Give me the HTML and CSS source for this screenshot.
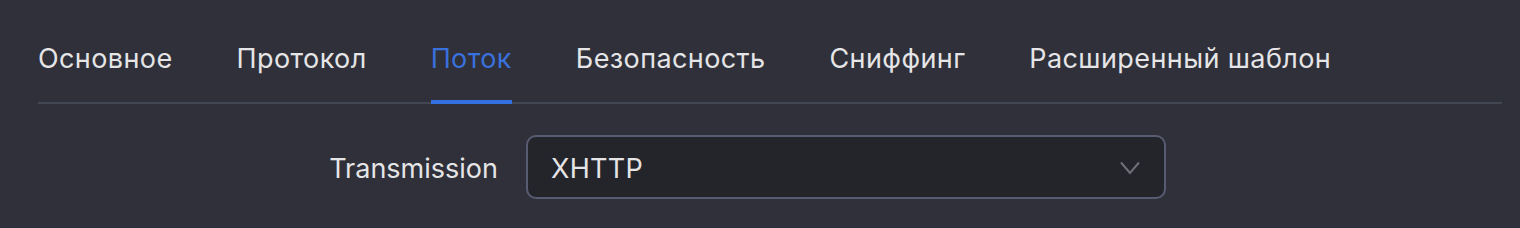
FILE: index.html
```html
<!DOCTYPE html>
<html lang="en">

<head>
  <meta charset="UTF-8">
  <title>Поток</title>
  <link rel="stylesheet" href="styles.css">
</head>

<body>
  <div class="tabs">
    <div class="tab">Основное</div>
    <div class="tab">Протокол</div>
    <div class="tab active">Поток</div>
    <div class="tab">Безопасность</div>
    <div class="tab">Сниффинг</div>
    <div class="tab">Расширенный шаблон</div>
  </div>
  <div class="formRow">
    <label class="formLabel">Transmission</label>
    <div class="select">
      <span class="selectValue">XHTTP</span>
      <svg class="chevron" width="20" height="14" viewBox="0 0 20 14">
        <path d="M1 1.5 L10 12 L19 1.5" fill="none" stroke="#6e7079" stroke-width="2"/>
      </svg>
    </div>
  </div>
</body>

</html>
```

FILE: styles.css
```css
body {
  margin: 0;
  padding: 27px 18px 0 38px;
  background-color: #2f3039;
  font-family: Inter, 'Noto Sans', sans-serif;
  color: #e5e5e7;
}

.tabs {
  display: flex;
  gap: 64px;
  border-bottom: 2px solid #434653;
}

.tab {
  font-size: 27px;
  letter-spacing: 0.4px;
  line-height: 64px;
  padding-bottom: 9px;
  margin-bottom: -2px;
  border-bottom: 4px solid transparent;
}

.tab.active {
  color: #3a70dc;
  border-bottom-color: #3370e0;
}

.formRow {
  display: flex;
  align-items: center;
  margin-top: 31px;
}

.formLabel {
  width: 460px;
  text-align: right;
  padding-right: 28px;
  padding-top: 2px;
  font-size: 27px;
}

.select {
  display: flex;
  align-items: center;
  justify-content: space-between;
  box-sizing: border-box;
  width: 640px;
  height: 64px;
  padding: 2px 24px 0 23px;
  background-color: #24252b;
  border: 2px solid #585c72;
  border-radius: 10px;
}

.selectValue {
  font-size: 27px;
  letter-spacing: 0.3px;
}
```
